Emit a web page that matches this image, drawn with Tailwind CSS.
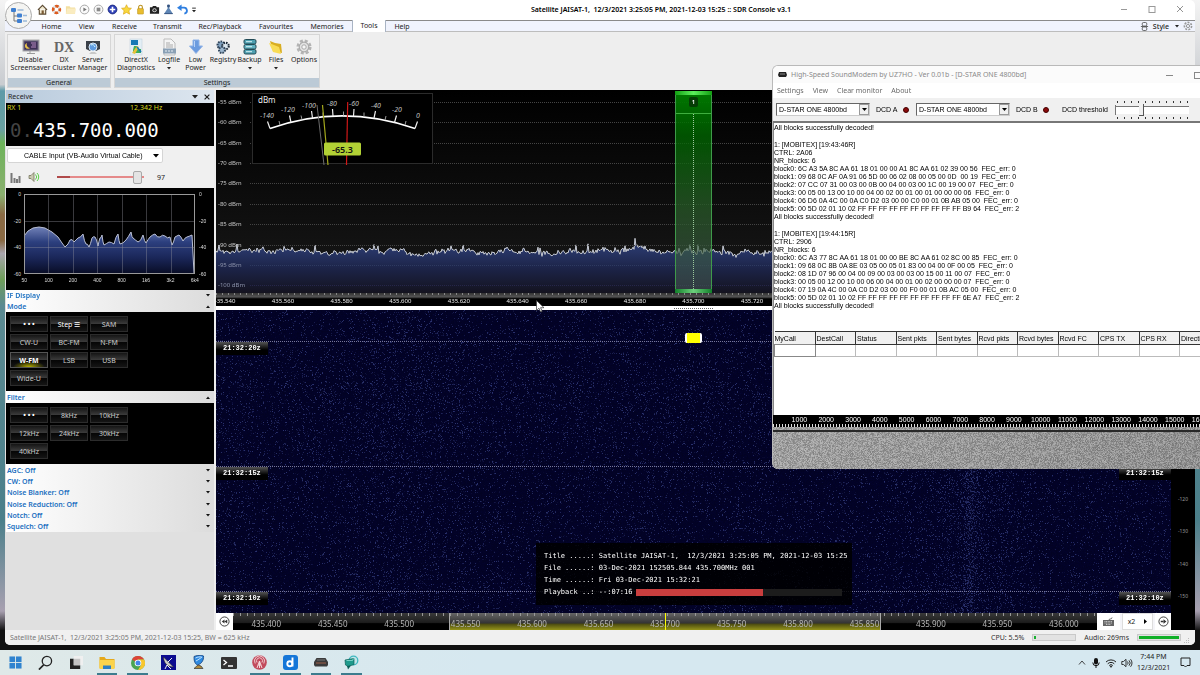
<!DOCTYPE html>
<html lang="en">
<head>
<meta charset="utf-8">
<title>Satellite JAISAT-1 :: SDR Console v3.1</title>
<script src="https://cdn.jsdelivr.net/npm/@tailwindcss/browser@4"></script>
</head>
<body class="h-screen flex flex-col overflow-hidden font-['Noto_Sans',sans-serif] text-[7px] leading-[9px] text-[#222] bg-black">

<main class="relative flex-1 min-h-0 flex pl-[5px] pr-[5px] pb-[5px] bg-[linear-gradient(#f4f4f4,#c9ccd0_13%,#5d9aa8_14%,#6aa0a0_20%,#6db35a_22%,#8bb070_30%,#8a6a44_33%,#8a6a44_37%,#a9a5ae_39%,#6f9e5a_43%,#5b8a92_47%,#4b7f8a_80%,#a8a0b0_94%,#111_97%)]">

  <!-- SDR Console window -->
  <section class="relative flex-1 min-w-0 flex flex-col bg-[#eeeeee] rounded-[5px] overflow-hidden">

    <header class="h-5 shrink-0 flex items-center bg-white pl-[32px] pr-[4px] pb-[2px]">
      <div class="flex items-center gap-[3px]">
        <button aria-label="Home"><svg class="block size-[11px]" viewBox="0 0 12 12"><path d="M1 6.5 6 1.5l5 5M2.5 6v5h7V6" fill="#f2ead2" stroke="#5b4a32" stroke-width="1.2"/><rect x="5" y="7" width="2.4" height="4" fill="#7b5b35"/></svg></button>
        <button aria-label="Help"><svg class="block size-[11px]" viewBox="0 0 12 12"><circle cx="6" cy="6" r="3.6" fill="none" stroke="#e0e0e0" stroke-width="3"/><circle cx="6" cy="6" r="3.6" fill="none" stroke="#dc5a1e" stroke-width="3" stroke-dasharray="3.6 2.05" stroke-dashoffset="1.8"/></svg></button>
        <button aria-label="Open"><svg class="block size-[11px]" viewBox="0 0 12 12"><path d="M1 2.5h4l1 1.2h5v6.8H1z" fill="#f3dfa0"/><path d="M2.4 5H12l-1.2 5.5H1z" fill="#faecc0"/></svg></button>
        <button aria-label="Play"><svg class="block size-[11px]" viewBox="0 0 12 12"><circle cx="6" cy="6" r="4.8" fill="#fafafa" stroke="#a0a0a0"/><path d="M4.8 3.8 8.4 6 4.8 8.2z" fill="#777"/></svg></button>
        <button aria-label="Stop"><svg class="block size-[11px]" viewBox="0 0 12 12"><circle cx="6" cy="6" r="4.8" fill="#fafafa" stroke="#a0a0a0"/><rect x="4" y="4" width="4" height="4" fill="#888"/></svg></button>
        <button aria-label="Add"><svg class="block size-[11px]" viewBox="0 0 12 12"><circle cx="6" cy="6" r="4.8" fill="#2d3fb8" stroke="#1d2a80"/><path d="M6 3v6M3 6h6" stroke="#fff" stroke-width="1.8"/></svg></button>
        <button aria-label="Favourite"><svg class="block size-[11px]" viewBox="0 0 12 12"><path d="m6 .8 1.6 3.5 3.8.4-2.8 2.6.8 3.8L6 9.2l-3.4 1.9.8-3.8L.6 4.7l3.8-.4z" fill="#f9d83e" stroke="#d9a514" stroke-width=".7"/></svg></button>
        <button aria-label="Lock"><svg class="block size-[11px]" viewBox="0 0 12 12"><path d="M4 5.5V3.4a2 2 0 0 1 4 0v2.1" fill="none" stroke="#b98f1a" stroke-width="1.2"/><rect x="2.8" y="5" width="6.4" height="6" rx=".6" fill="#e9bd2e" stroke="#b98f1a" stroke-width=".6"/></svg></button>
        <button aria-label="Screenshot"><svg class="block size-[11px]" viewBox="0 0 12 12"><path d="M1 3.5h2.500l.8-1.300h3.400l.8 1.300H11v7H1z" fill="#222"/><circle cx="6" cy="6.8" r="2.3" fill="#ddd"/><circle cx="6" cy="6.8" r="1.3" fill="#333"/></svg></button>
        <button aria-label="Tools"><svg class="block size-[11px]" viewBox="0 0 12 12"><path d="M5 1h2v4l4 6H1l4-6z" fill="#5f86b5"/><circle cx="6" cy="2.2" r="1.6" fill="#34527e"/><path d="M1.5 10.5h9" stroke="#34527e"/></svg></button>
        <button aria-label="Undo"><svg class="block size-[11px]" viewBox="0 0 12 12"><path d="M3 4h4a3 3 0 0 1 1 6.500" fill="none" stroke="#2f7fe0" stroke-width="2"/><path d="M0 4 5 .5v7z" fill="#2f7fe0"/></svg></button>
        <button aria-label="Customise"><svg class="block w-[6px] h-[11px]" viewBox="0 0 6 12"><path d="M1 4.500h4" stroke="#222"/><path d="M.8 6.500h4.400L3 9z" fill="#222"/></svg></button>
      </div>
      <h1 class="flex-1 text-center font-semibold pl-[5px] text-black whitespace-pre">Satellite JAISAT-1,  12/3/2021 3:25:05 PM, 2021-12-03 15:25 :: SDR Console v3.1</h1>
      <div class="flex items-center gap-[20px] pr-[7px]">
        <button aria-label="Minimise"><svg class="block size-[8px]" viewBox="0 0 8 8"><path d="M1 4.500h6" stroke="#999"/></svg></button>
        <button aria-label="Maximise"><svg class="block size-[8px]" viewBox="0 0 8 8"><rect x="1" y="1.500" width="6" height="6" fill="none" stroke="#999"/></svg></button>
        <button aria-label="Close"><svg class="block size-[8px]" viewBox="0 0 8 8"><path d="m1 1 6 6M7 1 1 7" stroke="#888" stroke-width=".9"/></svg></button>
      </div>
    </header>

    <nav class="h-[12px] shrink-0 flex items-center border-t border-[#8a8a8a] border-b border-b-[#bdbdbd] bg-[#f0f3fd] pl-[29px] pr-[2px]">
      <a href="#" class="w-[35px] text-center">Home</a>
      <a href="#" class="w-[35px] text-center">View</a>
      <a href="#" class="w-[41px] text-center">Receive</a>
      <a href="#" class="w-[45px] text-center">Transmit</a>
      <a href="#" class="w-[60px] text-center">Rec/Playback</a>
      <a href="#" class="w-[52px] text-center">Favourites</a>
      <a href="#" class="w-[50px] text-center">Memories</a>
      <a href="#" class="w-[34px] text-center bg-white border-x border-[#a9b4c4] h-[12px] leading-[12px]">Tools</a>
      <a href="#" class="w-[32px] text-center">Help</a>
      <span class="flex-1"></span>
      <svg class="size-[9px] mr-[4px]" viewBox="0 0 10 10" fill="none" stroke="#555"><rect x="2.5" y=".5" width="5" height="4" rx="1.5"/><rect x="2.5" y="5.5" width="5" height="4" rx="1.5"/><path d="M1 5h8"/></svg>
      <button class="font-medium flex items-center gap-[6px]">Style<svg class="w-[4px] h-[3px]" viewBox="0 0 4 3"><path d="M0 0h4L2 2.600z" fill="#222"/></svg></button>
      <svg class="size-[10px] ml-[4px]" viewBox="0 0 10 10" fill="none" stroke="#999"><circle cx="5" cy="5" r="1.6"/><circle cx="5" cy="5" r="3.6" stroke-width="1.6" stroke-dasharray="2 1.2"/></svg>
    </nav>

    <!-- Ribbon -->
    <div class="shrink-0 flex gap-[3px] px-[2px] pt-[2px] pb-[2px] h-[58px]">
      <div class="flex flex-col bg-[#f1f1f1] border border-[#d6d6d6]">
        <div class="flex-1 flex text-center leading-[8px]">
          <button class="w-[45px] flex flex-col items-center pt-[3px]"><svg class="size-[18px]" viewBox="0 0 18 18"><rect x="1" y="2" width="16" height="11" fill="#6d6680" stroke="#aaa"/><rect x="2.5" y="3.5" width="13" height="8" fill="#3d2f56"/><path d="M5 5a3 3 0 1 0 3 5 3.500 3.500 0 0 1-3-5z" fill="#e8c24a"/><path d="M9 5h5M10 7h4M9 9h5" stroke="#b78ac0"/><path d="M5 15.500h8M8 13v2" stroke="#999"/></svg>Disable<br>Screensaver</button>
          <button class="w-[22px] flex flex-col items-center pt-[3px]"><span class="h-[18px] leading-[19px] text-[14px] font-['Liberation_Serif',serif] font-bold text-[#666]">DX</span>DX<br>Cluster</button>
          <button class="w-[35px] flex flex-col items-center pt-[3px]"><svg class="size-[18px]" viewBox="0 0 18 18"><path d="M2 3h14v8l-4 2H6l-4-2z" fill="#3a4048"/><circle cx="9" cy="9" r="4" fill="#5f9be0" stroke="#dce9f7"/><path d="M7 7c2-1 3 0 4 2" stroke="#dff" fill="none"/><path d="M5 16h8l-2-2H7z" fill="#c9c9c9"/></svg>Server<br>Manager</button>
        </div>
        <div class="h-[9px] leading-[9px] text-center bg-[#bccad6]">General</div>
      </div>
      <div class="flex flex-col bg-[#f1f1f1] border border-[#d6d6d6]">
        <div class="flex-1 flex text-center leading-[8px]">
          <button class="w-[42px] flex flex-col items-center pt-[3px]"><svg class="size-[18px]" viewBox="0 0 18 18"><rect x="3" y="1" width="12" height="16" fill="#e3eef5" stroke="#c4d2dc" stroke-width=".6"/><rect x="4" y="2" width="7" height="5" fill="#1779b5"/><path d="M7 8h3v3h4v4H6v-3z" fill="#3fae5a"/><path d="m5 15 5-7 2 1-4 7z" fill="#e8c23a"/><path d="m10 9 4 5" stroke="#1779b5" stroke-width="1.5"/></svg>DirectX<br>Diagnostics</button>
          <button class="w-[24px] flex flex-col items-center pt-[3px]"><svg class="size-[18px]" viewBox="0 0 18 18"><path d="M4 1h7l4 4v12H4z" fill="#f4f4f4" stroke="#bbb"/><path d="M6 5h4M6 7h7M6 9h7" stroke="#aaa"/><rect x="3" y="10.5" width="13" height="5" fill="#8aa0b5"/><path d="M5 13h9" stroke="#e8eef4" stroke-dasharray="2 1"/></svg>Logfile<svg class="w-[4px] h-[8px]" viewBox="0 0 4 8"><path d="M0 3h4L2 5.600z" fill="#222"/></svg></button>
          <button class="w-[29px] flex flex-col items-center pt-[3px]"><svg class="size-[18px]" viewBox="0 0 18 18"><path d="M6 2h6v6h3.500L9 15.500 2.500 8H6z" fill="#6b9bdf" stroke="#8fb2e6"/><path d="M7.500 3v6" stroke="#b8d2f6"/></svg>Low<br>Power</button>
          <button class="w-[26px] flex flex-col items-center pt-[3px]"><svg class="size-[18px]" viewBox="0 0 18 18"><circle cx="7" cy="7" r="3.5" fill="#7fa0bf" stroke="#2d4258" stroke-width="2" stroke-dasharray="1.6 1"/><circle cx="11.5" cy="8" r="3.3" fill="#dbe7f0" stroke="#1f2c3a" stroke-width="2" stroke-dasharray="1.6 1"/><circle cx="8" cy="12" r="3" fill="#9db8d0" stroke="#33475c" stroke-width="2" stroke-dasharray="1.6 1"/></svg>Registry</button>
          <button class="w-[27px] flex flex-col items-center pt-[3px]"><svg class="size-[18px]" viewBox="0 0 18 18"><rect x="3" y="1.5" width="12" height="4.5" rx="1.5" fill="#4e9fb0" stroke="#234a55"/><rect x="3" y="6.5" width="12" height="4.5" rx="1.5" fill="#64b3c2" stroke="#234a55"/><rect x="3" y="11.5" width="12" height="4.5" rx="1.5" fill="#4e9fb0" stroke="#234a55"/><path d="M5 3.700h6M5 8.700h6M5 13.700h6" stroke="#d8f0f4"/></svg>Backup<svg class="w-[4px] h-[8px]" viewBox="0 0 4 8"><path d="M0 3h4L2 5.600z" fill="#222"/></svg></button>
          <button class="w-[26px] flex flex-col items-center pt-[3px]"><svg class="size-[18px]" viewBox="0 0 18 18"><path d="m3 3 5 2 6 1 1 9-9-2z" fill="#d9ae22"/><path d="m2 5 10 4 2 7-8-2z" fill="#f8dc55"/></svg>Files<svg class="w-[4px] h-[8px]" viewBox="0 0 4 8"><path d="M0 3h4L2 5.600z" fill="#222"/></svg></button>
          <button class="w-[30px] flex flex-col items-center pt-[3px]"><svg class="size-[18px]" viewBox="0 0 18 18"><circle cx="9" cy="9" r="6.3" fill="none" stroke="#b4b4b4" stroke-width="2.5" stroke-dasharray="3 1.95"/><circle cx="9" cy="9" r="4.8" fill="#e2e2e2" stroke="#aaa" stroke-width="1.2"/><circle cx="9" cy="9" r="2.2" fill="#f6f6f6" stroke="#aaa"/></svg>Options</button>
        </div>
        <div class="h-[9px] leading-[9px] text-center bg-[#bccad6]">Settings</div>
      </div>
    </div>

    <div class="flex-1 min-h-0 flex gap-[2px]">

      <!-- Receive panel -->
      <aside class="w-[209px] shrink-0 flex flex-col bg-[#e0e0e0] pl-px">
        <div class="h-[13px] shrink-0 flex items-center bg-[linear-gradient(90deg,#b9cbdd,#dde6ef)] px-[2px]">
          <h2 class="flex-1">Receive</h2>
          <svg class="w-[6px] h-[4px] mr-[6px]" viewBox="0 0 6 4"><path d="M0 0h6L3 3.600z" fill="#222"/></svg>
          <svg class="size-[6px] mr-[2px]" viewBox="0 0 6 6"><path d="m.6.6 4.800 4.800M5.400.6.600 5.400" stroke="#222" stroke-width="1.2"/></svg>
        </div>
        <div class="h-[43px] shrink-0 bg-black text-[#d8d81e] px-px">
          <div class="flex h-[11px] leading-[10px]"><span class="w-[123px]">RX 1</span><span>12,342 Hz</span></div>
          <div class="font-['DejaVu_Sans_Mono',monospace] text-[19px] leading-[32px] text-white pl-[3px]"><span class="text-[#444]">0.</span>435.700.000</div>
        </div>
        <div class="h-[42px] shrink-0 bg-[#f0f0f0]">
          <div class="relative w-[156px] ml-px pt-[2px]">
            <select aria-label="Audio output" class="block appearance-none w-full h-[15px] bg-white border border-[#d5d5d5] rounded-[2px] pl-[16px] font-['Liberation_Sans',sans-serif] text-[7px] text-black"><option>CABLE Input (VB-Audio Virtual Cable)</option></select>
            <svg class="absolute right-[4px] top-[8px] w-[6px] h-[4px]" viewBox="0 0 6 4"><path d="M0 0h6L3 3.600z" fill="#000"/></svg>
          </div>
          <div class="flex items-center h-[26px] pl-[4px] pt-[2px]">
            <svg class="size-[11px]" viewBox="0 0 11 11"><path d="M1.500 1v10M4.500 6v5M7 7v4M9.500 4v7" stroke="#777" stroke-width="2"/></svg>
            <svg class="ml-[7px] size-[12px]" viewBox="0 0 12 12"><path d="M1 4.500h2L6 1.500v9l-3-3H1z" fill="#c9c9b0" stroke="#6a6a50" stroke-width=".7"/><path d="M7.500 3.500a3.500 3.500 0 0 1 0 5M9 2a5.500 5.500 0 0 1 0 8" fill="none" stroke="#5fcf4a"/></svg>
            <input type="range" aria-label="Volume" min="0" max="100" value="97" class="ml-[17px] w-[87px] h-[13px] appearance-none bg-[linear-gradient(90deg,#b04a4a_15%,#e58a8a_15%)] bg-[length:100%_2px] bg-center bg-no-repeat [&::-webkit-slider-thumb]:appearance-none [&::-webkit-slider-thumb]:w-[9px] [&::-webkit-slider-thumb]:h-[13px] [&::-webkit-slider-thumb]:rounded-[2px] [&::-webkit-slider-thumb]:border [&::-webkit-slider-thumb]:border-[#a9a9a9] [&::-webkit-slider-thumb]:bg-[#e4e4e4]">
            <output class="ml-[13px]">97</output>
          </div>
        </div>
        <!-- Audio spectrum -->
        <div class="h-[102px] shrink-0 bg-black text-[5px] leading-[6px] text-[#ddd] pt-[3px] font-['Liberation_Sans',sans-serif]">
          <div class="flex h-[86px]">
            <div class="w-[18px] pr-[3px] flex flex-col justify-between text-right"><span>0</span><span>-20</span><span>-40</span><span>-60</span></div>
            <canvas id="audio" class="w-[171px] h-[80px] mt-[3px]"></canvas>
            <div class="pl-[4px] flex flex-col justify-between"><span>0</span><span>-20</span><span>-40</span><span>-60</span></div>
          </div>
          <div class="flex w-[195px] ml-[6px] text-center"><span class="flex-1">50</span><span class="flex-1">100</span><span class="flex-1">200</span><span class="flex-1">400</span><span class="flex-1">800</span><span class="flex-1">1k6</span><span class="flex-1">3k2</span><span class="flex-1">6k4</span></div>
        </div>
        <h2 class="h-[11px] shrink-0 flex items-center justify-between px-px pr-[4px] text-[#1a6fc0] font-semibold bg-[linear-gradient(90deg,#fff,#dcdcdc)]">IF Display<svg class="w-[4px] h-[3px]" viewBox="0 0 4 3"><path d="M0 0h4L2 2.600z" fill="#111"/></svg></h2>
        <h2 class="h-[11px] shrink-0 flex items-center justify-between px-px pr-[4px] text-[#1a6fc0] font-semibold bg-[linear-gradient(90deg,#fff,#dcdcdc)]">Mode<svg class="w-[4px] h-[3px]" viewBox="0 0 4 3"><path d="M0 3h4L2 .4z" fill="#111"/></svg></h2>
        <div class="h-[79px] shrink-0 bg-black pl-[4px] pt-[4px]">
          <div class="grid grid-cols-[38px_38px_38px] gap-[2px] text-[#c9c9c9] text-center">
            <button class="h-[16px] border border-[#2c2c2c] bg-[linear-gradient(#151515,#3c3c3c_50%,#050505_50%,#151515)] font-bold text-white">• • •</button>
            <button class="h-[16px] border border-[#2c2c2c] bg-[linear-gradient(#151515,#3c3c3c_50%,#050505_50%,#151515)] text-white">Step ☰</button>
            <button class="h-[16px] border border-[#2c2c2c] bg-[linear-gradient(#151515,#3c3c3c_50%,#050505_50%,#151515)]">SAM</button>
            <button class="h-[16px] border border-[#2c2c2c] bg-[linear-gradient(#151515,#3c3c3c_50%,#050505_50%,#151515)]">CW-U</button>
            <button class="h-[16px] border border-[#2c2c2c] bg-[linear-gradient(#151515,#3c3c3c_50%,#050505_50%,#151515)]">BC-FM</button>
            <button class="h-[16px] border border-[#2c2c2c] bg-[linear-gradient(#151515,#3c3c3c_50%,#050505_50%,#151515)]">N-FM</button>
            <button class="h-[16px] border border-[#555] bg-[radial-gradient(ellipse_16px_6px_at_50%_100%,#b5b000,#66640080_70%,transparent),linear-gradient(#151515,#3c3c3c_50%,#050505_50%,#151515)] font-bold text-white">W-FM</button>
            <button class="h-[16px] border border-[#2c2c2c] bg-[linear-gradient(#151515,#3c3c3c_50%,#050505_50%,#151515)]">LSB</button>
            <button class="h-[16px] border border-[#2c2c2c] bg-[linear-gradient(#151515,#3c3c3c_50%,#050505_50%,#151515)]">USB</button>
            <button class="h-[16px] border border-[#2c2c2c] bg-[linear-gradient(#151515,#3c3c3c_50%,#050505_50%,#151515)]">Wide-U</button>
          </div>
        </div>
        <h2 class="h-[12px] shrink-0 flex items-center justify-between px-px pr-[4px] text-[#1a6fc0] font-semibold bg-[linear-gradient(90deg,#fff,#dcdcdc)]">Filter<svg class="w-[4px] h-[3px]" viewBox="0 0 4 3"><path d="M0 3h4L2 .4z" fill="#111"/></svg></h2>
        <div class="h-[61px] shrink-0 bg-black pl-[4px] pt-[4px]">
          <div class="grid grid-cols-[38px_38px_38px] gap-[2px] text-[#c9c9c9] text-center">
            <button class="h-[16px] border border-[#2c2c2c] bg-[linear-gradient(#151515,#3c3c3c_50%,#050505_50%,#151515)] font-bold text-white">• • •</button>
            <button class="h-[16px] border border-[#2c2c2c] bg-[linear-gradient(#151515,#3c3c3c_50%,#050505_50%,#151515)]">8kHz</button>
            <button class="h-[16px] border border-[#2c2c2c] bg-[linear-gradient(#151515,#3c3c3c_50%,#050505_50%,#151515)]">10kHz</button>
            <button class="h-[16px] border border-[#2c2c2c] bg-[linear-gradient(#151515,#3c3c3c_50%,#050505_50%,#151515)]">12kHz</button>
            <button class="h-[16px] border border-[#2c2c2c] bg-[linear-gradient(#151515,#3c3c3c_50%,#050505_50%,#151515)]">24kHz</button>
            <button class="h-[16px] border border-[#2c2c2c] bg-[linear-gradient(#151515,#3c3c3c_50%,#050505_50%,#151515)]">30kHz</button>
            <button class="h-[16px] border border-[#2c2c2c] bg-[linear-gradient(#151515,#3c3c3c_50%,#050505_50%,#151515)]">40kHz</button>
          </div>
        </div>
        <div class="shrink-0 h-[68px] flex flex-col text-[#1a6fc0] font-semibold bg-[linear-gradient(90deg,#fff,#dcdcdc)] pl-px pr-[4px] pt-px">
          <h2 class="flex-1 flex items-center justify-between">AGC: Off<svg class="w-[4px] h-[3px]" viewBox="0 0 4 3"><path d="M0 0h4L2 2.600z" fill="#111"/></svg></h2>
          <h2 class="flex-1 flex items-center justify-between">CW: Off<svg class="w-[4px] h-[3px]" viewBox="0 0 4 3"><path d="M0 0h4L2 2.600z" fill="#111"/></svg></h2>
          <h2 class="flex-1 flex items-center justify-between">Noise Blanker: Off<svg class="w-[4px] h-[3px]" viewBox="0 0 4 3"><path d="M0 0h4L2 2.600z" fill="#111"/></svg></h2>
          <h2 class="flex-1 flex items-center justify-between">Noise Reduction: Off<svg class="w-[4px] h-[3px]" viewBox="0 0 4 3"><path d="M0 0h4L2 2.600z" fill="#111"/></svg></h2>
          <h2 class="flex-1 flex items-center justify-between">Notch: Off<svg class="w-[4px] h-[3px]" viewBox="0 0 4 3"><path d="M0 0h4L2 2.600z" fill="#111"/></svg></h2>
          <h2 class="flex-1 flex items-center justify-between">Squelch: Off<svg class="w-[4px] h-[3px]" viewBox="0 0 4 3"><path d="M0 0h4L2 2.600z" fill="#111"/></svg></h2>
        </div>
      </aside>

      <div class="flex-1 min-w-0 flex flex-col">

        <!-- RF spectrum -->
        <div class="relative h-[203px] shrink-0 overflow-hidden bg-[linear-gradient(#000,#181818)]">
          <canvas id="spectrum" class="absolute inset-0 w-full h-full"></canvas>
          <ol class="absolute inset-x-0 top-[2px] bottom-[-3px] flex flex-col pl-[2px] text-[6px] text-[#c4c4c4]">
            <li class="flex-1 flex items-center gap-[6px]"><span class="w-[26px]">-55 dBm</span><i class="flex-1 border-t border-dotted border-[#444]"></i></li>
            <li class="flex-1 flex items-center gap-[6px]"><span class="w-[26px]">-60 dBm</span><i class="flex-1 border-t border-dotted border-[#444]"></i></li>
            <li class="flex-1 flex items-center gap-[6px]"><span class="w-[26px]">-65 dBm</span><i class="flex-1 border-t border-dotted border-[#444]"></i></li>
            <li class="flex-1 flex items-center gap-[6px]"><span class="w-[26px]">-70 dBm</span><i class="flex-1 border-t border-dotted border-[#444]"></i></li>
            <li class="flex-1 flex items-center gap-[6px]"><span class="w-[26px]">-75 dBm</span><i class="flex-1 border-t border-dotted border-[#444]"></i></li>
            <li class="flex-1 flex items-center gap-[6px]"><span class="w-[26px]">-80 dBm</span><i class="flex-1 border-t border-dotted border-[#444]"></i></li>
            <li class="flex-1 flex items-center gap-[6px]"><span class="w-[26px]">-85 dBm</span><i class="flex-1 border-t border-dotted border-[#444]"></i></li>
            <li class="flex-1 flex items-center gap-[6px]"><span class="w-[26px]">-90 dBm</span><i class="flex-1 border-t border-dotted border-[#444]"></i></li>
            <li class="flex-1 flex items-center gap-[6px] text-[#8a90a8]"><span class="w-[26px]">-95 dBm</span><i class="flex-1 border-t border-dotted border-[#2e3a60]"></i></li>
            <li class="flex-1 flex items-center gap-[6px] text-[#8a90a8]"><span class="w-[26px] whitespace-nowrap">-100 dBm</span><i class="flex-1 border-t border-dotted border-[#26264a]"></i></li>
          </ol>
          <!-- Tuned passband -->
          <div class="absolute left-[459px] top-px bottom-0 w-[37px] border-x border-[#3f9a4a] bg-[linear-gradient(#007a00,#006c00c0_22%,#2a5a2ac0_60%,#50606080)] flex flex-col items-center">
            <span class="w-[37px] h-[4px] bg-[linear-gradient(90deg,#12a012,#5cf05c,#12a012)]"></span>
            <span class="mt-[2px] w-[9px] h-[10px] rounded-[2px] bg-[#053c05] text-white text-center text-[6px] leading-[10px] font-semibold">1</span>
            <span class="w-full border-t border-[#3fae3f] mt-[6px]"></span>
            <span class="flex-1 border-l border-dotted border-[#9cc89c]"></span>
            <span class="w-[37px] h-[4px] bg-[linear-gradient(90deg,#12802a,#6cd07c,#12802a)]"></span>
          </div>
          <!-- Signal meter -->
          <svg class="absolute left-[36px] top-[3px] w-[182px] h-[73px]" viewBox="0 0 182 73" font-family="Noto Sans">
            <rect x=".5" y=".5" width="180" height="70" fill="#000" stroke="#2b2b2b"/>
            <text x="6" y="10" font-size="8" fill="#eee">dBm</text>
            <path d="M18 35.500Q90 10.300 163 35.500" fill="none" stroke="#fff" stroke-width="1.6"/>
            <path d="m18 35.500-2.500-7M39 29.500l-1.500-7M60.500 25l-1-7M81 23l-.5-7M101.500 23l.5-7M122 25l1.500-7M142.500 29.500l2-7M163 35.500l2.500-7" stroke="#eee" stroke-width="1.2"/>
            <path d="m28 32-1-4M50 26.500l-1-4M71 23.500v-4M91.500 22.500v-4M112 23.500v-4M133 27l1-4M153 32l1-4" stroke="#999"/>
            <g font-size="7" font-style="italic" fill="#c4c4c4" text-anchor="middle"><text x="15" y="25">-140</text><text x="36" y="19">-120</text><text x="57" y="15">-100</text><text x="80" y="13">-80</text><text x="102" y="13">-60</text><text x="124" y="15">-40</text><text x="145" y="19">-20</text><text x="166" y="25">0</text></g>
            <path d="m65 12 7 60" stroke="#777" stroke-width=".9"/><path d="m70.500 12 5.500 60" stroke="#a3a81c" stroke-width="1.2"/><path d="m95.700 9-1.200 63" stroke="#d01818" stroke-width="1.2"/>
            <rect x="72" y="49.5" width="37" height="13" rx="1.5" fill="#b2d135"/>
            <text x="90.5" y="59.5" font-size="9" font-weight="600" fill="#111" text-anchor="middle">-65.3</text>
          </svg>
        </div>
        <div class="relative h-[13px] shrink-0 overflow-hidden bg-[linear-gradient(#333,#555_30%,#000_45%)]">
          <div class="h-[2px] bg-[repeating-linear-gradient(90deg,#888_0_1px,transparent_1px_6px)]"></div>
          <div class="absolute left-[-21px] right-[3px] bottom-0 flex text-[6px] leading-[9px] text-[#eee] text-center"><span class="flex-1">435.540</span><span class="flex-1">435.560</span><span class="flex-1">435.580</span><span class="flex-1">435.600</span><span class="flex-1">435.620</span><span class="flex-1">435.640</span><span class="flex-1">435.660</span><span class="flex-1">435.680</span><span class="flex-1">435.700</span><span class="flex-1">435.720</span><span class="flex-1">435.740</span><span class="flex-1">435.760</span><span class="flex-1">435.780</span><span class="flex-1">435.800</span><span class="flex-1">435.820</span><span class="flex-1">435.840</span><span class="flex-1">435.860</span></div>
        </div>
        <div class="h-[4px] shrink-0 bg-white flex items-center pl-[458px]"><i class="w-[39px] border-t border-dotted border-[#666]"></i></div>

        <div class="flex-1 min-h-0 flex">
          <div class="flex-1 min-w-0 flex flex-col">
            <!-- Waterfall -->
            <div class="relative flex-1 min-h-0 overflow-hidden bg-[#02022a]">
              <canvas id="waterfall" class="absolute inset-0 w-full h-full"></canvas>
              <div class="absolute inset-x-0 top-[31px] flex flex-col font-['Liberation_Mono',monospace] font-bold text-[7px] leading-[13px] text-white">
                <div class="h-[125px] border-t border-dotted border-[#76769a] flex justify-between items-start"><span class="w-[52px] pl-[7px] bg-[linear-gradient(#555,#000_60%)]">21:32:20z</span><span class="w-[52px] pl-[7px] bg-[linear-gradient(#555,#000_60%)]">21:32:20z</span></div>
                <div class="h-[125px] border-t border-dotted border-[#76769a] flex justify-between items-start"><span class="w-[52px] pl-[7px] bg-[linear-gradient(#555,#000_60%)]">21:32:15z</span><span class="w-[52px] pl-[7px] bg-[linear-gradient(#555,#000_60%)]">21:32:15z</span></div>
                <div class="border-t border-dotted border-[#76769a] flex justify-between items-start"><span class="w-[52px] pl-[7px] bg-[linear-gradient(#555,#000_60%)]">21:32:10z</span><span class="w-[52px] pl-[7px] bg-[linear-gradient(#555,#000_60%)]">21:32:10z</span></div>
              </div>
              <div class="absolute left-[469px] top-[23px] w-[17px] h-[10px] rounded-[2px] border-x-[2px] border-white bg-[#ffff00]"></div>
              <!-- Playback details -->
              <div class="absolute left-[320px] bottom-[8px] w-[316px] bg-black/85 py-[7px] px-[8px] font-['DejaVu_Sans_Mono',monospace] text-[7px] leading-[12px] text-white">
                <p class="whitespace-pre">Title .....: Satellite JAISAT-1,  12/3/2021 3:25:05 PM, 2021-12-03 15:25</p>
                <p class="whitespace-pre">File ......: 03-Dec-2021 152505.844 435.700MHz 001</p>
                <p class="whitespace-pre">Time ......: Fri 03-Dec-2021 15:32:21</p>
                <div class="flex items-center"><span class="whitespace-pre">Playback ..: --:07:16</span><div class="ml-[3px] w-[206px] h-[7px] bg-[#1c1c1c]"><div class="h-full bg-[#c93e3e]" style="width:62%"></div></div></div>
              </div>
            </div>
            <!-- Band overview -->
            <div class="h-[17px] shrink-0 flex bg-[#f4f4f8]">
              <button aria-label="Previous" class="w-[17px] flex items-center justify-center bg-white"><svg class="size-[11px]" viewBox="0 0 12 12"><circle cx="6" cy="6" r="5" fill="none" stroke="#333"/><path d="M6 3.800v4.400L3 6zM9 3.800v4.400L6 6z" fill="#333"/></svg></button>
              <div class="relative flex-1 bg-[linear-gradient(#3a3a3a,#1a1a1a_60%,#000_62%)]">
                <div class="absolute inset-y-0 left-[25%] right-[25%] border-x border-[#aaa] bg-[linear-gradient(#666,#333_60%,#4a4a10_64%,#94931a)]"></div>
                <div class="absolute inset-x-0 top-0 h-[3px] bg-[repeating-linear-gradient(90deg,#999_0_1px,transparent_1px_7px)]"></div>
                <div class="absolute inset-y-0 left-[50%] w-px bg-[#ffff00]"></div>
                <div class="absolute inset-x-0 bottom-[1px] flex text-center text-[8px] leading-[10px] text-[#b5b5b5]"><span class="flex-1">435.400</span><span class="flex-1">435.450</span><span class="flex-1">435.500</span><span class="flex-1">435.550</span><span class="flex-1">435.600</span><span class="flex-1">435.650</span><span class="flex-1">435.700</span><span class="flex-1">435.750</span><span class="flex-1">435.800</span><span class="flex-1">435.850</span><span class="flex-1">435.900</span><span class="flex-1">435.950</span><span class="flex-1">436.000</span></div>
              </div>
              <div class="w-[74px] flex gap-[2px]">
                <button aria-label="Keyboard" class="w-[23px] flex items-center justify-center bg-white"><svg class="w-[11px] h-[9px]" viewBox="0 0 11 9"><rect y="3" width="11" height="6" fill="#666"/><path d="M1.500 4.500h8M1.500 6h8M3 7.500h5" stroke="#ddd" stroke-width=".8" stroke-dasharray="1 .6"/><path d="M6 3c0-2 3 0 3-2.500" fill="none" stroke="#666"/></svg></button>
                <button class="flex-1 flex items-center justify-center gap-[9px] bg-white border border-[#ddd]">x2<svg class="w-[3px] h-[5px]" viewBox="0 0 3 5"><path d="M0 0v5l3-2.500z" fill="#000"/></svg></button>
                <button aria-label="Next" class="w-[16px] flex items-center justify-center bg-white"><svg class="size-[11px]" viewBox="0 0 12 12"><circle cx="6" cy="6" r="5" fill="none" stroke="#333"/><path d="M3 6h3" stroke="#333" stroke-width="1.4"/><path d="M6 3.500v5L9.200 6z" fill="#333"/></svg></button>
              </div>
            </div>
          </div>
          <div class="w-[24px] shrink-0 bg-black flex flex-col justify-end text-center text-[5px] text-[#999] pb-[18px]"><span class="h-[32px]">-120</span><span class="h-[33px]">-130</span><span class="h-[32px]">-140</span><span class="h-[20px]">-150</span></div>
        </div>
      </div>
    </div>

    <footer class="h-[15px] shrink-0 flex items-center bg-[#f0f0f0] px-[5px] text-[#333]">
      <span class="flex-1 text-[#777] whitespace-pre">Satellite JAISAT-1,  12/3/2021 3:25:05 PM, 2021-12-03 15:25, BW = 625 kHz</span>
      <span>CPU: 5.5%</span>
      <span class="ml-[8px] w-[44px] h-[7px] p-px border border-[#c9c9c9] bg-[#e2e2e2]"><i class="block h-full w-[2px] bg-[#18b030]"></i></span>
      <span class="ml-[8px]">Audio: 269ms</span>
      <span class="ml-[8px] w-[44px] h-[7px] p-px border border-[#c9c9c9] bg-[#e2e2e2]"><i class="block h-full bg-[#10b028]"></i></span>
      <svg class="ml-[3px] mt-[6px] size-[6px]" viewBox="0 0 6 6" fill="#bbb"><path d="M4 0h1v1H4zM4 2h1v1H4zM4 4h1v1H4zM2 2h1v1H2zM2 4h1v1H2zM0 4h1v1H0z"/></svg>
    </footer>

    <!-- Application button -->
    <button aria-label="Application menu" class="absolute left-0 top-[2px] size-[27px] rounded-full border border-[#aaa] bg-[#f4f4f2]"><svg class="block size-[25px]" viewBox="0 0 25 25"><path d="M8 8v10h5M8 13h5" fill="none" stroke="#777"/><rect x="5" y="5" width="5" height="4" rx="1" fill="#3f7fd0"/><rect x="11" y="10.5" width="5" height="4" rx="1" fill="#3f7fd0"/><rect x="11" y="16" width="5" height="4" rx="1" fill="#3f7fd0"/><path d="M11.500 7h6M17 12.500h4M17 18h4" stroke="#9bb8d8" stroke-width="1.5"/></svg></button>
  </section>

  <!-- SoundModem window -->
  <section class="absolute left-[772px] top-[65px] right-0 flex flex-col overflow-hidden bg-white rounded-l-[6px] border-l border-t border-[#b9b9b9] font-['Liberation_Sans',sans-serif] text-black">
    <header class="h-[17px] flex items-center gap-[4px] pl-[5px] bg-[#fbfbfb] text-[#8a8a8a] font-['Noto_Sans',sans-serif] whitespace-nowrap">
      <svg class="w-[9px] h-[6px]" viewBox="0 0 9 6"><path d="M1 0h7l1 3-1 2H1L0 3z" fill="#222"/><path d="M2 2h5" stroke="#888"/></svg>
      <h2 class="flex-1">High-Speed SoundModem by UZ7HO - Ver 0.01b - [D-STAR ONE 4800bd]</h2>
      <svg class="w-[34px] h-[8px]" viewBox="0 0 34 8" fill="none" stroke="#888"><path d="M0 4.500h7"/><rect x="28.5" y="1.5" width="6" height="6"/></svg>
    </header>
    <nav class="h-[15px] flex items-center gap-[9px] pl-[4px] text-[#6a6a6a] font-['Noto_Sans',sans-serif]"><a href="#">Settings</a><a href="#">View</a><a href="#">Clear monitor</a><a href="#">About</a></nav>
    <div class="h-[25px] flex items-center pl-[3px] bg-[#f0f0f0] border-b-2 border-[#777] whitespace-nowrap">
      <div class="relative w-[94px]"><select aria-label="Modem A" class="block appearance-none w-full h-[13px] pl-[2px] bg-white border border-[#666] border-r-[#ccc] border-b-[#ccc] text-[7px]"><option>D-STAR ONE 4800bd</option></select><span class="absolute right-[1px] top-[1px] w-[10px] h-[11px] bg-[#f0f0f0] border border-[#999] flex items-center justify-center pointer-events-none"><svg class="w-[5px] h-[3px]" viewBox="0 0 5 3"><path d="M0 0h5L2.500 3z"/></svg></span></div>
      <span class="ml-[6px] w-[27px]">DCD A</span><i class="size-[6px] rounded-full bg-[#8a0a0a] border border-[#400]"></i>
      <div class="relative w-[94px] ml-[7px]"><select aria-label="Modem B" class="block appearance-none w-full h-[13px] pl-[2px] bg-white border border-[#666] border-r-[#ccc] border-b-[#ccc] text-[7px]"><option>D-STAR ONE 4800bd</option></select><span class="absolute right-[1px] top-[1px] w-[10px] h-[11px] bg-[#f0f0f0] border border-[#999] flex items-center justify-center pointer-events-none"><svg class="w-[5px] h-[3px]" viewBox="0 0 5 3"><path d="M0 0h5L2.500 3z"/></svg></span></div>
      <span class="ml-[6px] w-[27px]">DCD B</span><i class="size-[6px] rounded-full bg-[#8a0a0a] border border-[#400]"></i>
      <label for="thr" class="ml-[13px] w-[53px]">DCD threshold</label>
      <div class="w-[74px] flex flex-col gap-[2px]">
        <i class="h-[2px] ml-[2px] bg-[repeating-linear-gradient(90deg,#333_0_1px,transparent_1px_7px)]"></i>
        <input id="thr" type="range" min="0" max="100" value="34" class="w-full h-[10px] appearance-none bg-[linear-gradient(#777_1px,#fff_1px)] bg-[length:100%_8px] bg-center bg-no-repeat border-l border-[#777] [&::-webkit-slider-thumb]:appearance-none [&::-webkit-slider-thumb]:w-[5px] [&::-webkit-slider-thumb]:h-[12px] [&::-webkit-slider-thumb]:bg-[#f0f0f0] [&::-webkit-slider-thumb]:border-r [&::-webkit-slider-thumb]:border-b [&::-webkit-slider-thumb]:border-[#555]">
        <i class="h-[2px] ml-[2px] bg-[repeating-linear-gradient(90deg,#333_0_1px,transparent_1px_7px)]"></i>
      </div>
    </div>
    <div class="h-[208px] flex flex-col gap-[9px] pt-px border-l border-[#888] leading-[8px] whitespace-pre">
      <p>All blocks successfully decoded!</p>
      <p>1: [MOBITEX] [19:43:46R]
CTRL: 2A06
NR_blocks: 6
block0: 6C A3 5A 8C AA 61 18 01 00 00 A1 8C AA 61 02 39 00 56  FEC_err: 0
block1: 09 68 0C AF 0A 91 06 5D 00 06 02 08 00 05 00 0D  00 19  FEC_err: 0
block2: 07 CC 07 31 00 03 00 0B 00 04 00 03 00 1C 00 19 00 07  FEC_err: 0
block3: 00 05 00 13 00 10 00 04 00 02 00 01 00 01 00 00 00 06  FEC_err: 0
block4: 06 D6 0A 4C 00 0A C0 D2 03 00 00 C0 00 01 0B AB 05 00  FEC_err: 0
block5: 00 5D 02 01 10 02 FF FF FF FF FF FF FF FF FF FF B9 64  FEC_err: 2
All blocks successfully decoded!</p>
      <p>1: [MOBITEX] [19:44:15R]
CTRL: 2906
NR_blocks: 6
block0: 6C A3 77 8C AA 61 18 01 00 00 BE 8C AA 61 02 8C 00 85  FEC_err: 0
block1: 09 68 0C 8B 0A 8E 03 05 00 05 01 83 00 04 00 0F 00 05  FEC_err: 0
block2: 08 1D 07 96 00 04 00 09 00 03 00 03 00 15 00 11 00 07  FEC_err: 0
block3: 00 05 00 12 00 10 00 06 00 04 00 01 00 02 00 00 00 07  FEC_err: 0
block4: 07 19 0A 4C 00 0A C0 D2 03 00 00 F0 00 01 0B AC 05 00  FEC_err: 0
block5: 00 5D 02 01 10 02 FF FF FF FF FF FF FF FF FF FF 6E A7  FEC_err: 2
All blocks successfully decoded!</p>
    </div>
    <div class="h-[84px] border-l border-[#888] overflow-hidden">
      <table class="table-fixed w-[446px] border-collapse text-left">
        <thead><tr class="h-[13px] bg-[#f0f0f0] border-y border-[#333]"><th class="font-normal border-r border-[#333]">MyCall</th><th class="font-normal border-r border-[#333] pl-px">DestCall</th><th class="font-normal border-r border-[#333] pl-px">Status</th><th class="font-normal border-r border-[#333] pl-px">Sent pkts</th><th class="font-normal border-r border-[#333] pl-px">Sent bytes</th><th class="font-normal border-r border-[#333] pl-px">Rcvd pkts</th><th class="font-normal border-r border-[#333] pl-px whitespace-nowrap">Rcvd bytes</th><th class="font-normal border-r border-[#333] pl-px">Rcvd FC</th><th class="font-normal border-r border-[#333] pl-px">CPS TX</th><th class="font-normal border-r border-[#333] pl-px">CPS RX</th><th class="font-normal pl-px">Direction</th></tr></thead>
        <tbody><tr class="h-[12px] border-b border-[#bbb]"><td class="border border-[#888]"></td><td class="border-r border-[#bbb]"></td><td class="border-r border-[#bbb]"></td><td class="border-r border-[#bbb]"></td><td class="border-r border-[#bbb]"></td><td class="border-r border-[#bbb]"></td><td class="border-r border-[#bbb]"></td><td class="border-r border-[#bbb]"></td><td class="border-r border-[#bbb]"></td><td class="border-r border-[#bbb]"></td><td></td></tr></tbody>
      </table>
    </div>
    <div class="h-[12px] bg-black text-white overflow-hidden">
      <div class="flex w-[429px] ml-[13px] text-center leading-[9px]"><span class="flex-1">1000</span><span class="flex-1">2000</span><span class="flex-1">3000</span><span class="flex-1">4000</span><span class="flex-1">5000</span><span class="flex-1">6000</span><span class="flex-1">7000</span><span class="flex-1">8000</span><span class="flex-1">9000</span><span class="flex-1">10000</span><span class="flex-1">11000</span><span class="flex-1">12000</span><span class="flex-1">13000</span><span class="flex-1">14000</span><span class="flex-1">15000</span><span class="flex-1">16000</span></div>
      <div class="h-[3px] bg-[repeating-linear-gradient(90deg,#ddd_0_1px,transparent_1px_3px)]"></div>
    </div>
    <canvas id="modem" class="block w-full h-[42px]"></canvas>
  </section>

  <svg class="absolute left-[536px] top-[300px] w-[9px] h-[13px]" viewBox="0 0 9 13"><path d="M.5.5v10l2.500-2.300 1.600 3.800 1.600-.7-1.600-3.600H8z" fill="#fff" stroke="#333" stroke-width=".7"/></svg>
</main>

<!-- Taskbar -->
<footer class="h-[25px] shrink-0 flex items-center bg-[linear-gradient(90deg,#dfe9e8,#d6e8f0_40%)] text-[#222]">
  <nav class="w-[367px] h-full flex">
    <button aria-label="Start" class="flex-1 flex items-center justify-center border-b-2 border-transparent mx-[5px]"><svg class="size-[13px] mt-[2px]" viewBox="0 0 14 14" fill="#2f83cf"><rect x=".5" y=".5" width="6" height="6"/><rect x="7.5" y=".5" width="6" height="6"/><rect x=".5" y="7.5" width="6" height="6"/><rect x="7.5" y="7.5" width="6" height="6"/></svg></button>
    <button aria-label="Search" class="flex-1 flex items-center justify-center border-b-2 border-transparent mx-[5px]"><svg class="size-[15px] mt-[2px]" viewBox="0 0 16 16"><circle cx="9.5" cy="6.5" r="5" fill="none" stroke="#222" stroke-width="1.4"/><path d="m6 10.500-5 5" stroke="#222" stroke-width="1.8"/></svg></button>
    <button aria-label="Task view" class="flex-1 flex items-center justify-center border-b-2 border-transparent mx-[5px]"><svg class="size-[13px] mt-[2px]" viewBox="0 0 14 14"><rect x="4" y="0" width="10" height="10" fill="#f0f0f0"/><path d="M0 3h4v7h7v4H0z" fill="#222"/><rect x="4" y="3" width="7" height="7" fill="#c4c4c4"/></svg></button>
    <button aria-label="Files" class="flex-1 flex items-center justify-center border-b-2 border-[#3d7c8e] mx-[5px]"><svg class="size-[16px] mt-[2px]" viewBox="0 0 16 16"><path d="M.5 2h5l1.500 2h8.500v9H.5z" fill="#e5a91c"/><path d="M.5 5h15v9H.5z" fill="#fbd44c"/><path d="M4 14v-3.500h8V14z" fill="#2c7fc4"/></svg></button>
    <button aria-label="Chrome" class="flex-1 flex items-center justify-center border-b-2 border-[#3d7c8e] mx-[5px]"><svg class="size-[14px] mt-[2px]" viewBox="0 0 14 14"><circle cx="7" cy="7" r="7" fill="#4aa451"/><path d="M7 7 1 3.400A7 7 0 0 1 13.100 3.500L7 3.500z" fill="#dc4437"/><path d="M7 3.500h6.100A7 7 0 0 1 7 14l3.200-5.300z" fill="#f8c72e"/><circle cx="7" cy="7" r="3.3" fill="#fff"/><circle cx="7" cy="7" r="2.5" fill="#4286e8"/></svg></button>
    <button aria-label="Orbitron" class="flex-1 flex items-center justify-center border-b-2 border-transparent mx-[5px]"><svg class="size-[15px] mt-[2px]" viewBox="0 0 15 15"><rect width="15" height="15" fill="#0b0b90"/><path d="M2.500 2c0 6 4 10 10 10z" fill="#ccc" stroke="#222" stroke-width=".6"/><path d="m7 7 4-4M6 10l-2 4M6 10l4 4" stroke="#eee"/></svg></button>
    <button aria-label="Satellite tracker" class="flex-1 flex items-center justify-center border-b-2 border-transparent mx-[5px]"><svg class="size-[15px] mt-[2px]" viewBox="0 0 15 15"><path d="M3 1.500c5-2 9-1 9.500-.5.5 4-2 8-6 9C3 8.500 3 4 3 1.500z" fill="#2f8be0" stroke="#123e7a" stroke-width=".8"/><path d="M4.500 3c2-1 5-1.500 6-1M5 6c2-1 4-2.500 6-4" stroke="#bfe0ff" fill="none"/><path d="m7 10-4 3.500h9L10 11z" fill="#b08a3a" stroke="#333" stroke-width=".7"/></svg></button>
    <button aria-label="Terminal" class="flex-1 flex items-center justify-center border-b-2 border-transparent mx-[5px]"><svg class="w-[16px] h-[12px] mt-[2px]" viewBox="0 0 16 12"><rect width="16" height="12" rx="1" fill="#333"/><path d="m2.500 3 3 2.500-3 2.500M7 9h5" fill="none" stroke="#fff" stroke-width="1.3"/></svg></button>
    <button aria-label="SDR Console" class="flex-1 flex items-center justify-center border-b-2 border-[#3d7c8e] mx-[5px]"><svg class="size-[15px] mt-[2px]" viewBox="0 0 15 15"><circle cx="7.5" cy="7.5" r="7.3" fill="#c24a5c"/><path d="M7.500 6v7M7.500 6 5 13M7.500 6l2.500 7M5.800 10h3.400" stroke="#f3d6da" fill="none"/><path d="M5 7.500a3 3 0 1 1 5 0M3.200 8.500a5 5 0 1 1 8.600 0" fill="none" stroke="#f3d6da" stroke-width=".9"/></svg></button>
    <button aria-label="Recorder" class="flex-1 flex items-center justify-center border-b-2 border-[#3d7c8e] mx-[5px]"><svg class="size-[15px] mt-[2px]" viewBox="0 0 15 15"><rect width="15" height="15" rx="3" fill="#1376d8"/><circle cx="6.8" cy="8.8" r="2.5" fill="none" stroke="#fff" stroke-width="1.9"/><path d="M9.500 2.500v9" stroke="#fff" stroke-width="1.9"/></svg></button>
    <button aria-label="SoundModem" class="flex-1 flex items-center justify-center border-b-2 border-[#3d7c8e] mx-[5px]"><svg class="w-[14px] h-[9px] mt-[2px]" viewBox="0 0 14 9"><path d="M2.500 0h9L14 4v3l-1 1.500H1L0 7V4z" fill="#3b3b3b"/><path d="M2 5h10" stroke="#a0604a"/><path d="M3 2h8" stroke="#777"/></svg></button>
    <button aria-label="Telemetry" class="flex-1 flex items-center justify-center border-b-2 border-[#3d7c8e] mx-[5px]"><svg class="size-[15px] mt-[2px]" viewBox="0 0 15 15"><circle cx="9.5" cy="5.5" r="4.3" fill="#bfe6ea" stroke="#3fb8c0" stroke-width="1.3"/><path d="m1 5 9-1.500v6L4 11.500 1.500 10z" fill="#1f9a8c" stroke="#0c5e56" stroke-width=".7"/><path d="m2.500 5.500 6 0 1-2" fill="none" stroke="#8fe0d6" stroke-width=".8"/><path d="m3 11 1 3.500 3-4z" fill="#0c5e56"/></svg></button>
  </nav>
  <span class="flex-1"></span>
  <div class="flex items-center gap-[4px] pr-[9px]">
    <svg class="w-[8px] h-[5px] mr-px" viewBox="0 0 8 5"><path d="m1 4.500 3-3.500 3 3.500" fill="none" stroke="#333" stroke-width=".9"/></svg>
    <svg class="w-[10px] h-[12px]" viewBox="0 0 10 12"><rect x="3" y="1" width="4" height="6.5" rx="2" fill="#111"/><path d="M1.800 5.500a3.200 3.200 0 0 0 6.400 0M5 8.500V11" fill="none" stroke="#111"/></svg>
    <svg class="w-[12px] h-[10px]" viewBox="0 0 12 10" fill="none" stroke="#222"><path d="M1 4a7 7 0 0 1 10 0M2.700 5.800a4.600 4.600 0 0 1 6.600 0M4.200 7.500a2.500 2.500 0 0 1 3.600 0"/><circle cx="6" cy="8.6" r=".6" fill="#222"/></svg>
    <svg class="w-[12px] h-[10px]" viewBox="0 0 12 10" fill="none" stroke="#222" stroke-width=".9"><path d="M.8 3.500h1.700L5 1.300v7.400L2.500 6.500H.8zM6.500 3.500a2.300 2.300 0 0 1 0 3M8 2.300a4 4 0 0 1 0 5.400M9.500 1.200a5.600 5.600 0 0 1 0 7.600"/></svg>
    <time class="text-center text-[7px] leading-[11px] mr-[4px] w-[33px] pb-[2px]">7:44 PM<br>12/3/2021</time>
    <svg class="size-[11px] ml-[2px]" viewBox="0 0 11 11"><path d="M1 1h9v7.500H7L5.500 10 4 8.500H1z" fill="none" stroke="#222" stroke-linejoin="round"/></svg>
  </div>
</footer>

<script>
  // Seeded noise source, so that every redraw gives the same plot.
  function noise(seed) {
    return () => (seed = (seed * 1664525 + 1013904223) >>> 0) / 4294967296;
  }

  // Calls draw(context, width, height, random) at start and whenever the canvas is laid out anew.
  function plot(id, draw) {
    const c = document.getElementById(id);
    new ResizeObserver(() => {
      const w = c.clientWidth, h = c.clientHeight;
      if (!w || !h) return;
      c.width = w; c.height = h;
      draw(c.getContext('2d'), w, h, noise(20211203));
    }).observe(c);
  }

  // Fills below a list of points with a vertical gradient and strokes its upper edge.
  function trace(g, pts, h, top, colors, line) {
    const grad = g.createLinearGradient(0, top, 0, h);
    colors.forEach((c, i) => grad.addColorStop(i / (colors.length - 1), c));
    g.beginPath(); g.moveTo(pts[0][0], h);
    pts.forEach(p => g.lineTo(p[0], p[1]));
    g.lineTo(pts[pts.length - 1][0], h); g.fillStyle = grad; g.fill();
    g.beginPath(); pts.forEach(p => g.lineTo(p[0], p[1]));
    g.strokeStyle = line; g.lineWidth = 1; g.stroke();
  }

  plot('spectrum', (g, w, h, rnd) => {
    const pts = []; let drift = 0;
    for (let x = 0; x <= w; x++) {
      drift = drift * 0.93 + (rnd() - 0.5) * 3;
      const spike = rnd() > 0.96 ? 6 * rnd() + 3 : 0;
      pts.push([x, 161 + drift + (rnd() - 0.5) * 4 - spike]);
    }
    trace(g, pts, h, 155, ['#2b3b70', '#1c2347', '#14131f'], '#c8ccd4');
  });

  plot('audio', (g, w, h, rnd) => {
    const shape = [[0,42],[4,37],[9,34],[15,33],[21,34],[28,38],[34,43],[38,49],[41,53],[44,50],[46,46],[50,48],[54,44],[59,40],[62,50],[65,53],[68,44],[71,43],[74,52],[76,44],[78,41],[80,51],[85,48],[90,50],[94,40],[96,50],[102,46],[107,38],[109,44],[114,48],[119,41],[122,49],[126,43],[131,40],[136,43],[141,42],[146,43],[148,51],[151,43],[155,41],[159,47],[163,43],[168,41],[170,79]];
    const pts = [];
    shape.forEach((p, i) => {
      pts.push([p[0] * w / 171, p[1]]);
      const n = shape[i + 1];
      if (n && p[0] > 44 && n[0] < 169) pts.push([(p[0] + n[0]) / 2 * w / 171, (p[1] + n[1]) / 2 + (rnd() - 0.5) * 4]);
    });
    trace(g, pts, h, 32, ['#7585bb', '#2c3f7e', '#1a2658', '#080c24'], '#b9bfd4');
    g.fillStyle = 'rgba(150,150,160,.38)';
    for (let i = 1; i < 7; i++) g.fillRect(Math.round(i * w / 7), 0, 1, h);
    for (let i = 1; i < 3; i++) g.fillRect(0, Math.round(i * h / 3), w, 1);
    g.strokeStyle = '#999'; g.strokeRect(0.5, 0.5, w - 1, h - 1);
  });

  plot('waterfall', (g, w, h, rnd) => {
    const img = g.createImageData(w, h), d = img.data;
    for (let y = 0; y < h; y++) {
      const row = 0.07 + rnd() * 0.05 + (rnd() > 0.93 ? 0.09 : 0) + Math.exp(-(((y - 90) / 40) ** 2)) * 0.05;
      for (let x = 0; x < w; x++) {
        const i = (y * w + x) * 4;
        const a = Math.exp(-(((x - 754) / 6) ** 2)) * 0.3 + Math.exp(-(((x - 754) / 45) ** 2)) * 0.12 + Math.exp(-(((x - 180) / 50) ** 2)) * 0.05;
        const hit = rnd() < row + a ? rnd() : 0;
        d[i] = 2 + hit * 42; d[i + 1] = 2 + hit * 50; d[i + 2] = 34 + rnd() * 8 + hit * 74; d[i + 3] = 255;
      }
    }
    g.putImageData(img, 0, 0);
  });

  plot('modem', (g, w, h, rnd) => {
    const img = g.createImageData(w, h), d = img.data;
    for (let y = 0; y < h; y++) for (let x = 0; x < w; x++) {
      const i = (y * w + x) * 4;
      const v = y === 3 || y === 4 ? 40 : 158 + (rnd() - 0.5) * 56 - 14 * x / w;
      d[i] = d[i + 1] = d[i + 2] = v; d[i + 3] = 255;
    }
    g.putImageData(img, 0, 0);
  });
</script>
</body>
</html>
